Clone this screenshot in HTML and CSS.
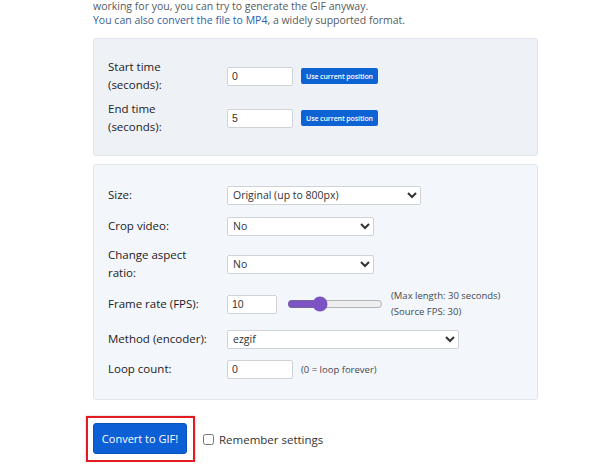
FILE: index.html
```html
<!DOCTYPE html>
<html lang="en">
<head>
    <meta charset="UTF-8">
    <meta name="viewport" content="width=device-width, initial-scale=1.0">
    <title>Video to GIF</title>
    <link rel="stylesheet" href="styles.css">
</head>
<body>
    <div class="page">
        <p class="intro">working for you, you can try to generate the GIF anyway.<br>
            <span class="blue">You can also <a href="#">convert the file to MP4</a></span>, a widely supported format.</p>

        <div class="panel times">
            <div class="row">
                <label class="lbl">Start time<br>(seconds):</label>
                <input type="text" class="field short" value="0">
                <button class="smallbtn">Use current position</button>
            </div>
            <div class="row">
                <label class="lbl">End time<br>(seconds):</label>
                <input type="text" class="field short" value="5">
                <button class="smallbtn">Use current position</button>
            </div>
        </div>

        <div class="panel options">
            <div class="row">
                <label class="lbl">Size:</label>
                <select class="field wide"><option>Original (up to 800px)</option></select>
            </div>
            <div class="row crop">
                <label class="lbl">Crop video:</label>
                <select class="field mid"><option>No</option></select>
            </div>
            <div class="row">
                <label class="lbl">Change aspect<br>ratio:</label>
                <select class="field mid"><option>No</option></select>
            </div>
            <div class="row fps">
                <label class="lbl">Frame rate (FPS):</label>
                <input type="text" class="field tiny" value="10">
                <input type="range" class="slider" min="1" max="30" value="10">
                <span class="note">(Max length: 30 seconds)<br>(Source FPS: 30)</span>
            </div>
            <div class="row">
                <label class="lbl">Method (encoder):</label>
                <select class="field huge"><option>ezgif</option></select>
            </div>
            <div class="row">
                <label class="lbl">Loop count:</label>
                <input type="text" class="field short" value="0">
                <span class="hint">(0 = loop forever)</span>
            </div>
        </div>

        <div class="actions">
            <span class="highlight"><button class="convert">Convert to GIF!</button></span>
            <label class="remember"><input type="checkbox"> Remember settings</label>
        </div>
    </div>
</body>
</html>
```

FILE: styles.css
```css
*{
    margin: 0;
    padding: 0;
    box-sizing: border-box;
}
body{
    background: #ffffff;
    font-family: "Open Sans", "Noto Sans", sans-serif;
    color: #212529;
}
.page{
    width: 445px;
    margin-left: 93px;
}
.intro{
    font-size: 10.5px;
    line-height: 13.5px;
    color: #555a60;
    margin-top: 0;
    margin-bottom: 11px;
}
.intro a{
    color: #2d62a8;
    text-decoration: none;
}
.blue{
    color: #3c5f8c;
}
.panel{
    background: #eef1f6;
    border: 1px solid #e1e5eb;
    border-radius: 3px;
    padding: 19px 14px 19px;
    display: flex;
    flex-direction: column;
}
.times{
    gap: 6px;
}
.options{
    background: #f3f6fa;
    margin-top: 8px;
    padding: 20px 14px 20px;
    gap: 10px;
}
.options .crop{
    margin-top: 1px;
}
.options .fps{
    margin-top: -4px;
    margin-bottom: -1px;
}
.row{
    display: flex;
    align-items: center;
    min-height: 20px;
}
.lbl{
    width: 119px;
    flex-shrink: 0;
    font-size: 11.5px;
    line-height: 18px;
    color: #1d2125;
}
.field{
    height: 19px;
    border: 1px solid #cfd3d8;
    border-radius: 2px;
    background: #ffffff;
    font-family: "Liberation Sans", Arial, sans-serif;
    font-size: 10.5px;
    color: #333;
    padding: 0 4px;
}
select.field{
    padding: 0 2px 0 1px;
    font-family: "Open Sans", "Noto Sans", sans-serif;
    font-size: 10.5px;
}
.short{ width: 66px; }
.tiny{ width: 50px; }
.wide{ width: 194px; }
.mid{ width: 147px; }
.huge{ width: 232px; }
.smallbtn{
    margin-left: 8px;
    height: 16px;
    width: 77px;
    background: #0d62d4;
    color: #ffffff;
    border: none;
    border-radius: 2px;
    font-family: "Open Sans", sans-serif;
    font-size: 7px;
    font-weight: 600;
    letter-spacing: -0.1px;
}
.slider{
    width: 96px;
    margin-left: 10px;
    accent-color: #7c52c4;
    height: 12px;
}
.note{
    margin-left: 8px;
    font-size: 9.5px;
    line-height: 16px;
    color: #444a50;
}
.hint{
    margin-left: 8px;
    font-size: 9.5px;
    color: #444a50;
}
.actions{
    display: flex;
    align-items: center;
    margin-top: 16px;
    margin-left: -7px;
}
.highlight{
    display: inline-block;
    border: 2.5px solid #e31a22;
    padding: 5px 6px 6px 5px;
    box-shadow: 0 0 2px rgba(0,0,0,0.25);
}
.convert{
    display: block;
    width: 94px;
    height: 31px;
    background: #0d5fd6;
    color: #ffffff;
    border: 1px solid #0a52bb;
    border-radius: 3px;
    font-family: "Open Sans", sans-serif;
    font-size: 11px;
}
.remember{
    display: flex;
    align-items: center;
    margin-left: 8px;
    font-size: 11.5px;
    color: #333;
}
.remember input{
    width: 11px;
    height: 11px;
    margin-right: 5px;
}
```
